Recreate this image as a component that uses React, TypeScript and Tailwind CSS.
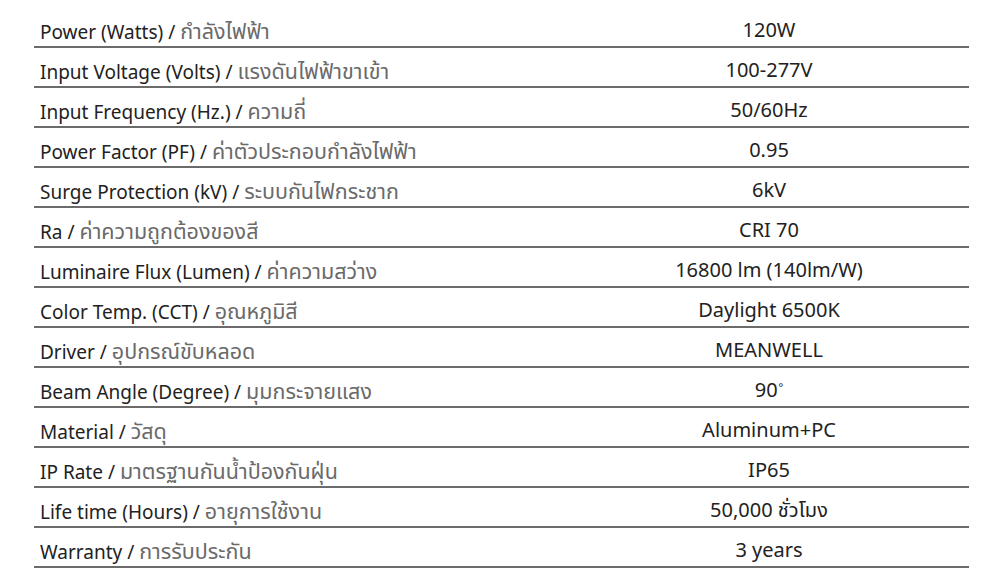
const specs = [
  { en: 'Power (Watts)', th: 'กำลังไฟฟ้า', value: '120W' },
  { en: 'Input Voltage (Volts)', th: 'แรงดันไฟฟ้าขาเข้า', value: '100-277V' },
  { en: 'Input Frequency (Hz.)', th: 'ความถี่', value: '50/60Hz' },
  { en: 'Power Factor (PF)', th: 'ค่าตัวประกอบกำลังไฟฟ้า', value: '0.95' },
  { en: 'Surge Protection (kV)', th: 'ระบบกันไฟกระชาก', value: '6kV' },
  { en: 'Ra', th: 'ค่าความถูกต้องของสี', value: 'CRI 70' },
  { en: 'Luminaire Flux (Lumen)', th: 'ค่าความสว่าง', value: '16800 lm (140lm/W)' },
  { en: 'Color Temp. (CCT)', th: 'อุณหภูมิสี', value: 'Daylight 6500K' },
  { en: 'Driver', th: 'อุปกรณ์ขับหลอด', value: 'MEANWELL' },
  { en: 'Beam Angle (Degree)', th: 'มุมกระจายแสง', value: '90', deg: true },
  { en: 'Material', th: 'วัสดุ', value: 'Aluminum+PC' },
  { en: 'IP Rate', th: 'มาตรฐานกันน้ำป้องกันฝุ่น', value: 'IP65' },
  { en: 'Life time (Hours)', th: 'อายุการใช้งาน', value: '50,000 ชั่วโมง' },
  { en: 'Warranty', th: 'การรับประกัน', value: '3 years' },
];

export default function App() {
  return (
    <div
      className="w-[994px] h-[584px] bg-white pt-[8px] pl-[34px] text-[19px] text-[#222]"
      style={{ fontFamily: '"Noto Sans", "Noto Sans Thai", "DejaVu Sans", sans-serif' }}
    >
      <div className="w-[935px]">
        {specs.map((s) => (
          <div key={s.en} className="grid grid-cols-[535px_1fr] h-[40px] border-b-2 border-[#6b6b6b]">
            <div className="pl-[6px] flex items-end pb-[4px] leading-none">
              <span>
                {s.en} / <span className="text-[#6a6a6a] text-[21.5px]">{s.th}</span>
              </span>
            </div>
            <div className="flex items-end justify-center pb-[6px] leading-none text-[20px]">
              <span>
                {s.value}
                {s.deg && <sup className="text-[11px] ml-[1px] relative -top-[6px]">°</sup>}
              </span>
            </div>
          </div>
        ))}
      </div>
    </div>
  );
}
